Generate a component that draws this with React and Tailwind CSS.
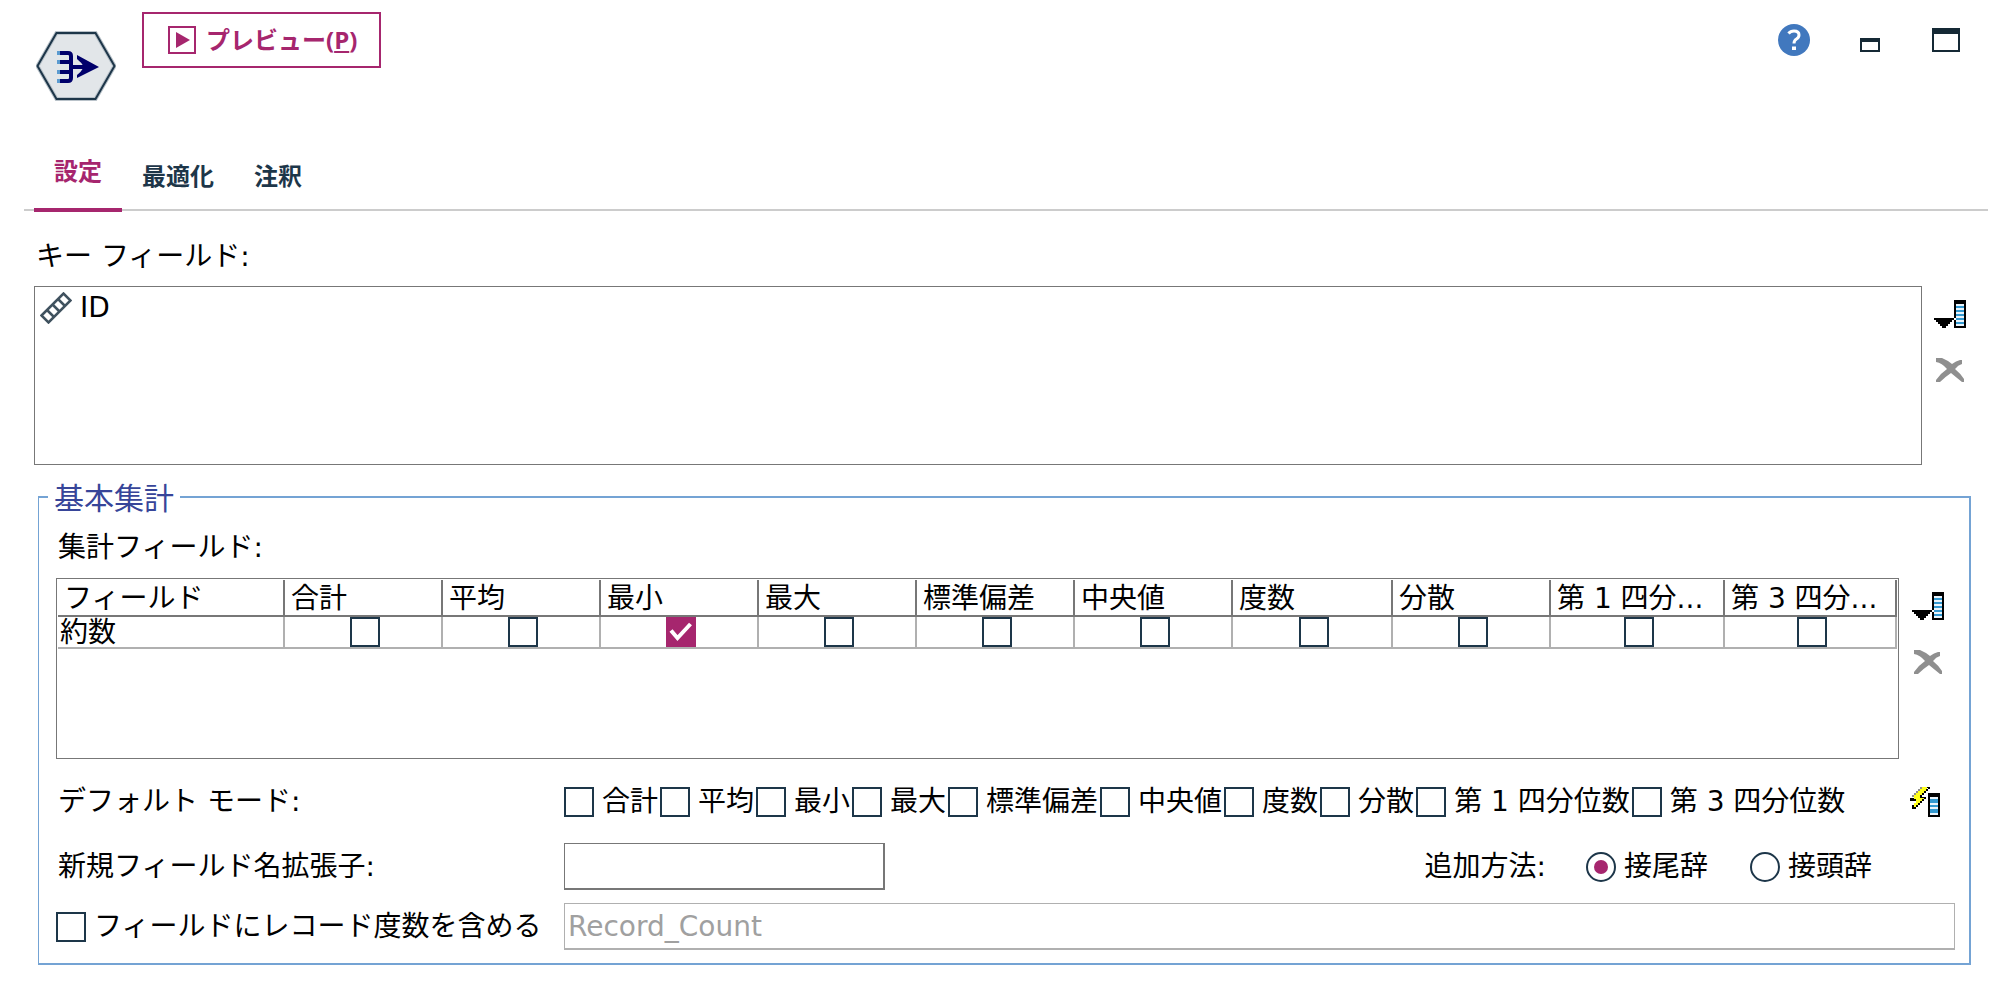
const SANS = 'font-["DejaVu_Sans","Noto_Sans_CJK_JP",sans-serif]';
const BOLD = 'font-["Open_Sans","Noto_Sans_CJK_JP",sans-serif] font-bold text-[24px] leading-8';

const columns = [
  { name: 'フィールド', width: 'w-[227px]' },
  { name: '合計', width: 'w-[158px]' },
  { name: '平均', width: 'w-[158px]' },
  { name: '最小', width: 'w-[158px]', checked: true },
  { name: '最大', width: 'w-[158px]' },
  { name: '標準偏差', width: 'w-[158px]' },
  { name: '中央値', width: 'w-[158px]' },
  { name: '度数', width: 'w-[160px]' },
  { name: '分散', width: 'w-[158px]' },
  { name: '第 1 四分...', width: 'w-[174px]' },
  { name: '第 3 四分...', width: 'w-[172px]' },
];

const modes = ['合計', '平均', '最小', '最大', '標準偏差', '中央値', '度数', '分散', '第 1 四分位数', '第 3 四分位数'];

function Check({ id, checked, label }) {
  return (
    <span className="grid size-[30px] shrink-0">
      <input
        id={id}
        type="checkbox"
        defaultChecked={checked}
        aria-label={label}
        className="peer col-start-1 row-start-1 size-[30px] appearance-none border-2 border-[#1d3649] bg-white checked:border-[#a6266e] checked:bg-[#a6266e]"
      />
      <svg viewBox="0 0 30 30" className="pointer-events-none invisible col-start-1 row-start-1 size-[30px] peer-checked:visible" fill="none" stroke="#fff" strokeWidth="4">
        <path d="M5 13.500 L11.500 21 L24.500 7" />
      </svg>
    </span>
  );
}

function Radio({ id, checked, children }) {
  return (
    <label htmlFor={id} className="flex items-center gap-2">
      <span className="grid size-[30px] place-items-center">
        <input
          id={id}
          type="radio"
          name="affix"
          defaultChecked={checked}
          className="peer col-start-1 row-start-1 size-[30px] appearance-none rounded-full border-2 border-[#1d3649] bg-white"
        />
        <span className="pointer-events-none invisible col-start-1 row-start-1 size-[14px] rounded-full bg-[#a6266e] peer-checked:visible" />
      </span>
      {children}
    </label>
  );
}

function PickIcon() {
  return (
    <svg viewBox="0 0 32 28" className="h-7 w-8" shapeRendering="crispEdges">
      <path d="M0 18h20v2h-2v2h-2v2h-2v2h-2v2H8v-2H6v-2H4v-2H2v-2H0z" fill="#000" />
      <path d="M20 0h12v28H20z" fill="#000" />
      <path d="M22 4h8v22h-8z" fill="#eaf4fb" />
      <path d="M22 6h8v2h-8zM22 10h8v2h-8zM22 14h8v2h-8zM22 18h8v2h-8zM22 22h8v2h-8z" fill="#3399d0" />
      <path d="M20 18h2v2h-2z" fill="#fff" />
    </svg>
  );
}

function DeleteIcon() {
  return (
    <svg viewBox="0 0 28 24" className="h-6 w-7" fill="#8f8f8f">
      <path d="M0 0h6q5 2 10 6q4-3 8-4h2v4q-4 1-7 5q5 4 9 10v3h-2q-5-4-11-9q-6 4-11 9H0v-2q5-7 11-11Q6 5 0 4z" />
    </svg>
  );
}

function FlashIcon() {
  return (
    <svg viewBox="0 0 30 30" className="size-[30px]" shapeRendering="crispEdges">
      <path d="M10 0h2v2h-2zM8 2h2v2H8zM6 4h2v2H6zM4 6h2v2H4zM2 8h2v2H2z" fill="#8f8f8f" />
      <path d="M12 0h5v2h-1v2h-2v2h-2v2h-2v2h4v2h-2v2h-2v2H8v2H6v2H4v-4h2v-4H4V8h2V6h2V4h2V2h2z" fill="#ffff1a" />
      <path d="M16 0h4v2h-2v2h-2v2h-2v2h-2v2h4v2h-2v2h-2v2h-2v2H8v2H6v2H2v-4h2v2h2v-2h2v-2h2v-2h2v-2h2v-1h-4V8h2V6h2V4h2V2h2zM0 11h4v1h2v2H0z" fill="#000" />
      <path d="M18 6h12v24H18z" fill="#000" />
      <path d="M20 10h8v18h-8z" fill="#eaf4fb" />
      <path d="M20 12h8v4h-8zM20 18h8v2h-8zM20 22h8v4h-8z" fill="#3399d0" />
    </svg>
  );
}

function SideButtons() {
  return (
    <div className="flex flex-col items-center gap-[30px] pt-3.5">
      <button type="button" aria-label="フィールドの選択"><PickIcon /></button>
      <button type="button" aria-label="削除"><DeleteIcon /></button>
    </div>
  );
}

export default function App() {
  return (
    <main className={`${SANS} min-h-screen bg-white text-[28px] leading-9 text-black`}>
      <header className="flex items-start pl-9 pr-[42px] pt-3">
        <svg viewBox="0 0 80 70" className="mt-[19px] h-[70px] w-20">
          <path d="M20.500 2h39L78.500 35l-19 33h-39L1.500 35z" fill="#e2e6e9" stroke="#b9c2c9" strokeWidth="4" />
          <path d="M20.500 2h39L78.500 35l-19 33h-39L1.500 35z" fill="none" stroke="#1d3649" strokeWidth="2" />
          <g fill="none" stroke="#00006b" strokeWidth="4">
            <path d="M23 22h9q3 0 3 3v22q0 3-3 3h-9M23 31h12M23 41h12M35 36h20" />
          </g>
          <path d="M21 20h3v4h-3zM21 29h3v4h-3zM21 39h3v4h-3zM21 48h3v4h-3z" fill="#5b9bd0" />
          <path d="M41 24l22 12-22 11v-3q4-3 7-8q-3-5-7-8z" fill="#00006b" />
        </svg>
        <button type="button" className={`${BOLD} ml-[26px] flex h-14 items-center gap-2.5 border-2 border-[#a6266e] pl-6 pr-[22px] text-[#a6266e]`}>
          <svg viewBox="0 0 28 28" className="size-7">
            <path d="M1 1h26v26H1z" fill="none" stroke="#a6266e" strokeWidth="2" />
            <path d="M8 6l14 8-14 8z" fill="#a6266e" />
          </svg>
          <span>プレビュー(<u className="underline decoration-2 underline-offset-2">P</u>)</span>
        </button>
        <div className="ml-auto flex items-center pt-3">
          <button type="button" aria-label="ヘルプ">
            <svg viewBox="0 0 32 32" className="size-8">
              <circle cx="16" cy="16" r="16" fill="#4178be" />
              <path d="M10.500 9.500q2-2.500 5.500-2.500q5 0 5 4q0 2.500-2.500 4q-2.500 1.500-2.500 4.500" fill="none" stroke="#fff" strokeWidth="3" />
              <path d="M14 22.500h4v3.500h-4z" fill="#fff" />
            </svg>
          </button>
          <button type="button" aria-label="最小化" className="ml-[50px]">
            <svg viewBox="0 0 20 32" className="h-8 w-5" shapeRendering="crispEdges">
              <path d="M0 14h20v14H0zM2 18v8h16v-8z" fill="#152935" fillRule="evenodd" />
            </svg>
          </button>
          <button type="button" aria-label="最大化" className="ml-[52px]">
            <svg viewBox="0 0 28 32" className="h-8 w-7" shapeRendering="crispEdges">
              <path d="M0 4h28v24H0zM2 10v16h24V10z" fill="#152935" fillRule="evenodd" />
            </svg>
          </button>
        </div>
      </header>

      <nav className={`${BOLD} ml-6 mr-3.5 mt-[47px] flex h-[63px] items-stretch border-b-2 border-[#cccccc] pl-2.5 text-[#1d3649]`}>
        <a href="#settings" className="-mb-[3px] flex items-center border-b-4 border-[#a6266e] px-5 pb-3.5 text-[#a6266e]">設定</a>
        <a href="#optimize" className="ml-5 flex items-center pb-1.5">最適化</a>
        <a href="#annotations" className="ml-10 flex items-center pb-1.5">注釈</a>
      </nav>

      <section className="pl-[34px] pr-9 pt-7">
        <h2 className="pl-0.5">キー フィールド:</h2>
        <div className="mt-[11px] flex gap-3">
          <ul aria-label="キー フィールド" className="h-[179px] grow border border-[#777777] p-1 pt-[3px]">
            <li className="flex items-center gap-2 pl-px">
              <svg viewBox="0 0 32 32" className="size-8" fill="none" stroke="#40525f" strokeWidth="2.500">
                <path d="M1.500 23.500L23.500 1.500l7 7-22 22z" />
                <path d="M7 18l7 7M12.500 12.500l7 7M18 7l7 7" />
              </svg>
              ID
            </li>
          </ul>
          <SideButtons />
        </div>
      </section>

      <fieldset className="ml-[38px] mr-[31px] mt-2.5 border-y-2 border-l border-r-2 border-[#74a3d4] pb-[13px] pl-[17px] pr-3.5">
        <legend className="-ml-2 px-1.5 pt-1 text-[30px] leading-[40px] text-[#374599]">基本集計</legend>
        <h3 className="mt-[11px] pl-0.5">集計フィールド:</h3>
        <div className="mt-3 flex gap-[13px] pr-[11px]">
          <div className="h-[181px] grow border border-[#777777] px-px pt-px">
            <table className="w-full table-fixed border-separate border-spacing-0 text-left">
              <thead>
                <tr>
                  {columns.map((c) => (
                    <th key={c.name} scope="col" className={`${c.width} h-[37px] whitespace-nowrap border-b-2 border-r-2 border-[#777777] p-0 pl-1.5 pt-0.5 font-normal leading-[33px]`}>
                      {c.name}
                    </th>
                  ))}
                </tr>
              </thead>
              <tbody>
                <tr>
                  <td className="h-8 border-b-2 border-r-2 border-[#b0b0b0] p-0 pl-0.5 pt-0.5 leading-7">約数</td>
                  {columns.slice(1).map((c) => (
                    <td key={c.name} className="border-b-2 border-r-2 border-[#b0b0b0] p-0 pl-1">
                      <div className="flex justify-center">
                        <Check checked={c.checked} label={c.name} />
                      </div>
                    </td>
                  ))}
                </tr>
              </tbody>
            </table>
          </div>
          <SideButtons />
        </div>

        <div className="mt-[25px] flex items-center pr-[15px]">
          <span className="w-[508px] pl-0.5">デフォルト モード:</span>
          <div className="flex gap-0.5">
            {modes.map((m, i) => (
              <label key={m} htmlFor={`mode-${i}`} className="flex items-center gap-2 whitespace-nowrap">
                <Check id={`mode-${i}`} />
                {m}
              </label>
            ))}
          </div>
          <button type="button" aria-label="デフォルトを適用" className="ml-auto"><FlashIcon /></button>
        </div>

        <div className="mt-[23px] flex items-center pr-[83px]">
          <label htmlFor="extension" className="w-[508px] pl-0.5">新規フィールド名拡張子:</label>
          <input id="extension" type="text" className="h-[47px] w-[321px] border border-b-2 border-r-2 border-[#777777] px-1" />
          <span className="ml-auto">追加方法:</span>
          <div className="ml-10 flex gap-[42px]">
            <Radio id="suffix" checked>接尾辞</Radio>
            <Radio id="prefix">接頭辞</Radio>
          </div>
        </div>

        <div className="mt-[13px] flex items-center">
          <label htmlFor="count" className="flex w-[508px] shrink-0 items-center gap-2">
            <Check id="count" />
            フィールドにレコード度数を含める
          </label>
          <input type="text" aria-label="レコード度数フィールド名" defaultValue="Record_Count" disabled className="h-[47px] grow border border-b-2 border-[#b0b0b0] px-[3px] text-[#a0a0a0]" />
        </div>
      </fieldset>
    </main>
  );
}
